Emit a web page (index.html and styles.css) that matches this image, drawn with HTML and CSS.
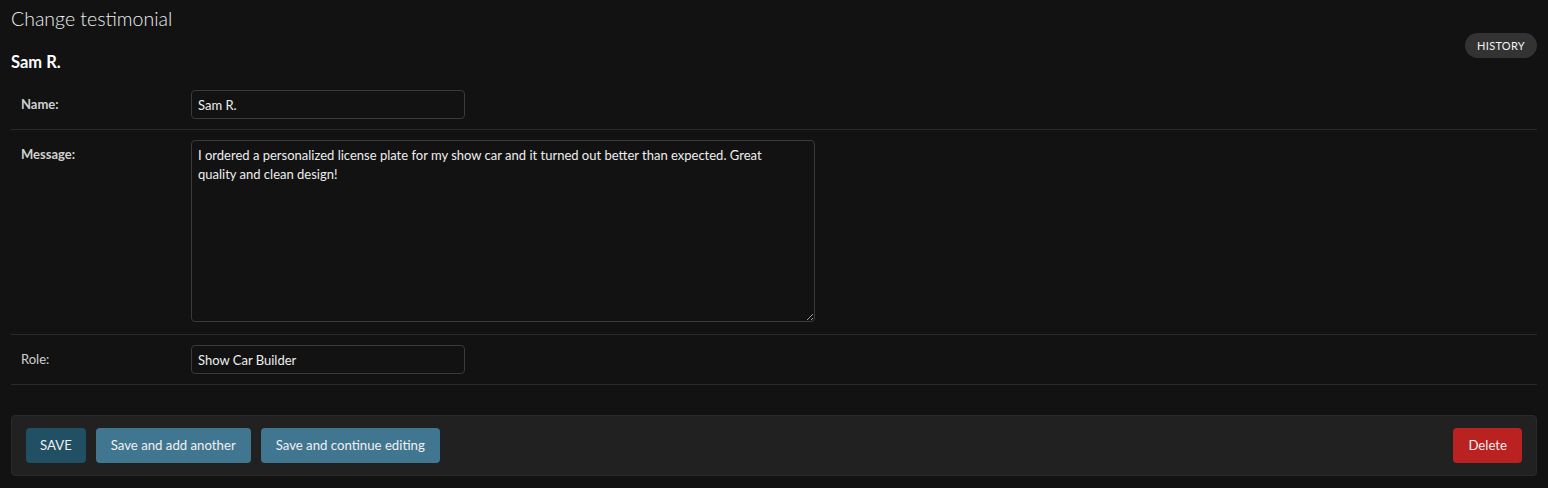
FILE: index.html
```html
<!DOCTYPE html>
<html lang="en">
<head>
<meta charset="utf-8">
<title>Change testimonial</title>
<link rel="stylesheet" href="styles.css">
</head>
<body>
<div class="content">
  <h1 class="title">Change testimonial</h1>
  <div class="subhead">
    <h2 class="object-name">Sam R.</h2>
    <a class="history-link" href="#">History</a>
  </div>
  <form class="form">
    <div class="form-row">
      <label class="label required" for="id_name">Name:</label>
      <input class="text-input" id="id_name" type="text" value="Sam R.">
    </div>
    <div class="form-row">
      <label class="label required" for="id_message">Message:</label>
      <textarea class="textarea" id="id_message">I ordered a personalized license plate for my show car and it turned out better than expected. Great quality and clean design!</textarea>
    </div>
    <div class="form-row">
      <label class="label" for="id_role">Role:</label>
      <input class="text-input" id="id_role" type="text" value="Show Car Builder">
    </div>
    <div class="submit-row">
      <button type="button" class="btn btn-default">SAVE</button>
      <button type="button" class="btn">Save and add another</button>
      <button type="button" class="btn">Save and continue editing</button>
      <a href="#" class="btn btn-delete">Delete</a>
    </div>
  </form>
</div>
</body>
</html>
```

FILE: styles.css
```css
* { box-sizing: border-box; }
body {
  margin: 0;
  background: #121212;
  color: #eeeeee;
  font-family: "Lato", "Noto Sans", sans-serif;
  font-size: 13px;
}
.content {
  padding: 6px 11px 0 11px;
}
.title {
  margin: 0;
  font-size: 19.5px;
  font-weight: 300;
  line-height: 26px;
  color: #eeeeee;
}
.subhead {
  display: flex;
  justify-content: space-between;
  align-items: flex-start;
  margin-top: 1px;
}
.object-name {
  margin: 20px 0 0 0;
  font-size: 16.5px;
  font-weight: 700;
  line-height: 19px;
  color: #ffffff;
}
.history-link {
  display: block;
  background: #333333;
  color: #f4f4f4;
  text-decoration: none;
  font-size: 11px;
  text-transform: uppercase;
  letter-spacing: 0.3px;
  line-height: 15px;
  padding: 5px 12px;
  border-radius: 15px;
}
.form {
  margin-top: 8px;
}
.form-row {
  display: flex;
  align-items: flex-start;
  padding: 10px;
  border-bottom: 1px solid #2a2a2a;
}
.label {
  width: 170px;
  flex: none;
  padding: 6px 10px 0 0;
  line-height: 16px;
  color: #d0d0d0;
}
.label.required {
  font-weight: 700;
}
.text-input,
.textarea {
  background: #121212;
  color: #eeeeee;
  border: 1px solid #3a3a3a;
  border-radius: 4px;
  font-family: inherit;
  font-size: 13px;
  padding: 5px 6px;
  margin: 0;
}
.text-input {
  width: 274px;
  height: 29px;
}
.textarea {
  display: block;
  width: 624px;
  height: 182px;
  line-height: 19px;
  padding-right: 18px;
  resize: both;
  margin-bottom: 2px;
}
.submit-row {
  display: flex;
  gap: 10px;
  margin-top: 30px;
  padding: 12px 14px;
  background: #212121;
  border: 1px solid #2a2a2a;
  border-radius: 4px;
}
.btn {
  display: block;
  border: none;
  border-radius: 4px;
  background: #417690;
  color: #f0f0f0;
  font-family: inherit;
  font-size: 13.2px;
  line-height: 15px;
  padding: 10px 15px;
  text-decoration: none;
  cursor: pointer;
}
.btn-default {
  background: #214f64;
  padding: 10px 14px;
}
.btn-delete {
  margin-left: auto;
  background: #ba2121;
}
```
